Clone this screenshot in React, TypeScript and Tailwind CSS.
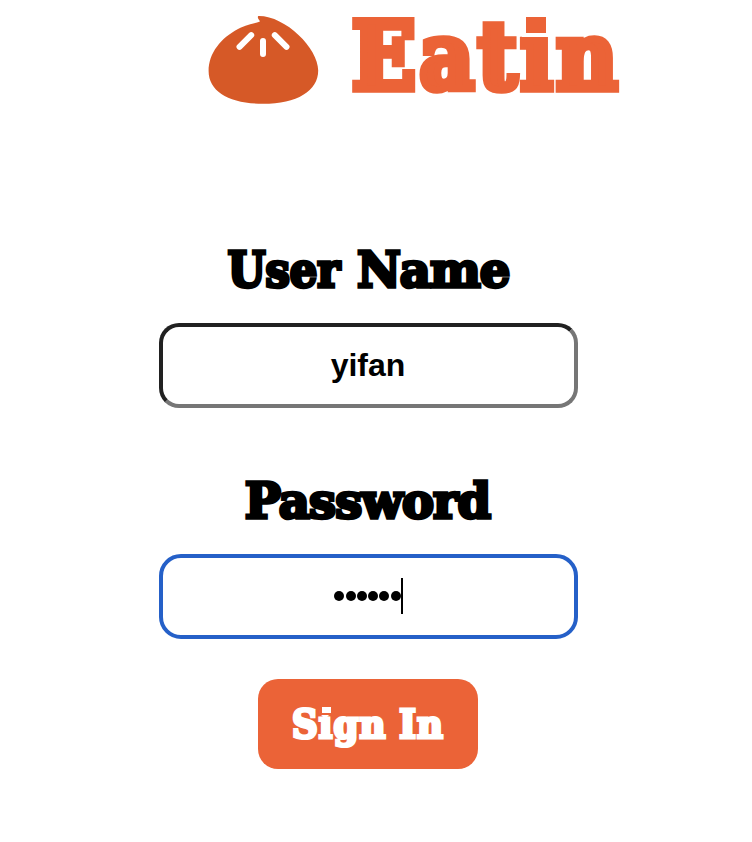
import React from "react";

const slabBase = "font-bold whitespace-nowrap [-webkit-text-stroke-color:currentColor]";
const slab = `${slabBase} font-['DejaVu_Serif_Condensed','DejaVu_Serif',serif] [font-stretch:condensed]`;
const slabWide = `${slabBase} font-['DejaVu_Serif',serif] [font-stretch:normal]`;

function BunLogo() {
  return (
    <svg className="h-[90px] w-[112px] shrink-0" viewBox="208 15 112 90" aria-hidden="true">
      <path
        d="M258.3 16C256.9 17.5 258.9 19.4 260 21.2C258.5 22.8 248 23.7 238 29C221 38 208.6 53 208.6 71C208.6 92 230 103.8 263 103.8C297 103.8 318.2 91 318.2 70.5C318.2 48 285 15.5 258.3 16Z"
        fill="#d65927"
      />
      <g stroke="#fff" strokeWidth="6" strokeLinecap="round">
        <path d="M251.2 35.2L239.5 46.8M263 41V54M274.8 35.2L286.5 46.8" />
      </g>
    </svg>
  );
}

export default function App() {
  return (
    <main className="flex h-[842px] w-[752px] flex-col items-center bg-white pr-[15px] text-black">
      <header className="flex h-[120px] w-full items-start pl-[208px] pt-[15px]">
        <BunLogo />
        <h1 className={`${slab} ml-[32px] mt-[2px] text-[93px] leading-[80px] tracking-[4px] text-[#eb6337] [-webkit-text-stroke-width:7.4px]`}>
          Eat
          <span className="relative before:absolute before:left-[5px] before:top-[15px] before:h-[16px] before:w-[20px] before:bg-[#eb6337] before:shadow-[0_0_0_4px_#fff]">
            i
          </span>
          n
        </h1>
      </header>
      <form className="flex flex-col items-center" onSubmit={(e) => e.preventDefault()}>
        <label htmlFor="user" className={`${slab} mt-[120px] h-[60px] text-[48px] leading-[60px] [-webkit-text-stroke-width:3.4px]`}>
          <span>User</span>{" "}
          <span className={`${slabWide} ml-[2px] tracking-[-1px]`}>Name</span>
        </label>
        <input
          id="user"
          defaultValue="yifan"
          className="mt-[23px] h-[85px] w-[419px] rounded-[20px] border-4 border-b-[#767676] border-l-[#212121] border-r-[#767676] border-t-[#212121] pr-px text-center font-['Liberation_Sans',sans-serif] text-[32px] font-bold outline-none"
        />
        <label className={`${slabWide} mr-[2px] mt-[63px] h-[60px] text-[48px] leading-[60px] tracking-[-0.8px] [-webkit-text-stroke-width:3.4px]`}>
          Password
        </label>
        <div className="mt-[23px] flex h-[85px] w-[419px] items-center justify-center rounded-[22px] border-4 border-[#2560c8] pb-[2px]">
          <div className="flex gap-[1.25px]" aria-label="Password entered">
            {[0, 1, 2, 3, 4, 5].map((i) => (
              <span key={i} className="size-[10px] rounded-full bg-black" />
            ))}
          </div>
          <span className="h-[36px] w-[2px] bg-black" />
        </div>
        <button className={`${slab} mr-px mt-[40px] h-[90px] w-[220px] rounded-[20px] bg-[#eb6337] text-[39.5px] leading-[90px] tracking-[1.2px] text-white [-webkit-text-stroke-width:3.2px] [word-spacing:-1px]`}>
          S
          <span className="relative before:absolute before:left-[3px] before:top-[6px] before:h-[6px] before:w-[9px] before:bg-white before:shadow-[0_0_0_2px_#eb6337]">
            i
          </span>
          gn In
        </button>
      </form>
    </main>
  );
}
